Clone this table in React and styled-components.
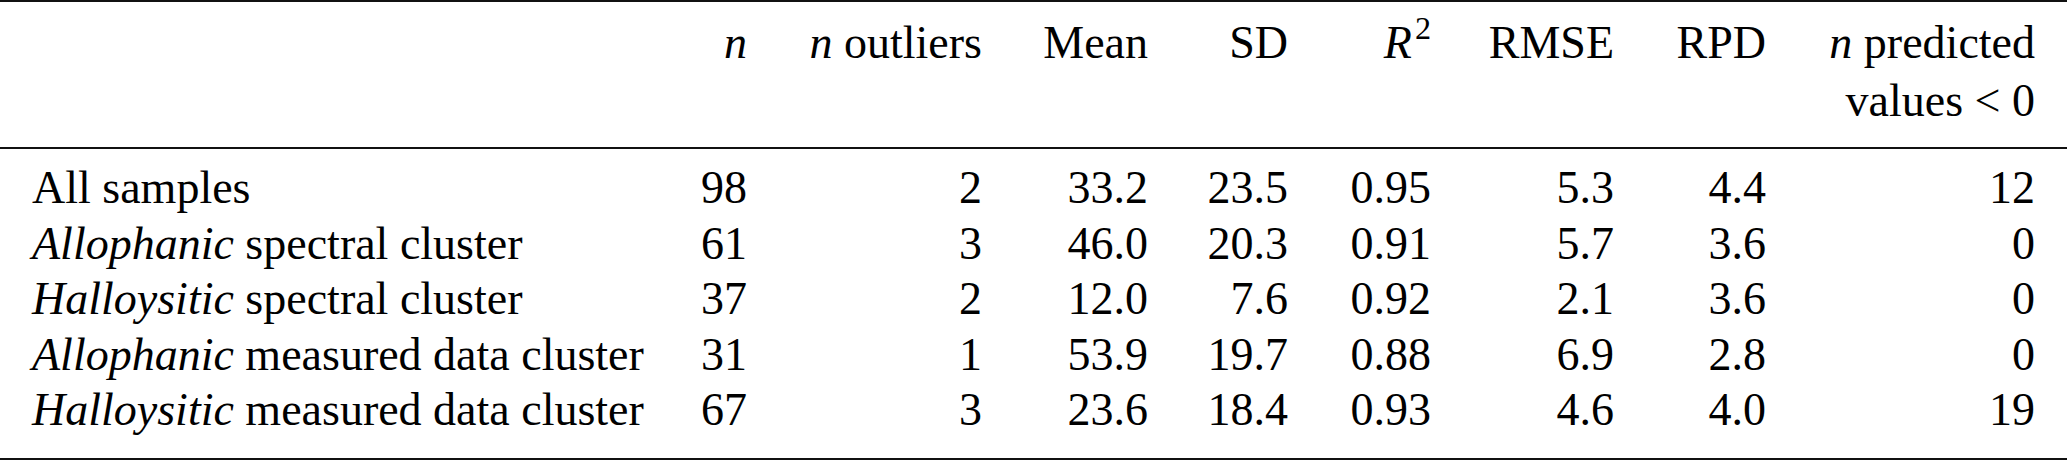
import React from 'react';
import styled, { createGlobalStyle } from 'styled-components';

const GlobalStyle = createGlobalStyle`
  html, body {
    margin: 0;
    padding: 0;
    background: #fff;
  }
`;

// label | n | n outliers | Mean | SD | R2 | RMSE | RPD | n predicted
const COLUMNS = '668px 47px 235px 166px 140px 143px 183px 152px 269px';

const Table = styled.div`
  width: 2067px;
  box-sizing: border-box;
  font-family: "Liberation Serif", "Times New Roman", serif;
  font-size: 46px;
  color: #000;
  border-top: 2px solid #111;
  border-bottom: 2px solid #111;
`;

const HeadRow = styled.div`
  display: grid;
  grid-template-columns: ${COLUMNS};
  padding: 12px 32px 17px;
  line-height: 58px;
  border-bottom: 2px solid #111;
`;

const Body = styled.div`
  padding: 11px 32px 20px;
`;

const Row = styled.div`
  display: grid;
  grid-template-columns: ${COLUMNS};
  line-height: 55.5px;
`;

const Cell = styled.div`
  text-align: ${(p) => (p.$left ? 'left' : 'right')};
  white-space: nowrap;
`;

const Var = styled.i`
  font-style: italic;
`;

const Sup = styled.sup`
  font-size: 0.7em;
  line-height: 0;
  vertical-align: 0.6em;
  margin-left: 3px;
`;

const rows = [
  { em: '', label: 'All samples', v: ['98', '2', '33.2', '23.5', '0.95', '5.3', '4.4', '12'] },
  { em: 'Allophanic', label: ' spectral cluster', v: ['61', '3', '46.0', '20.3', '0.91', '5.7', '3.6', '0'] },
  { em: 'Halloysitic', label: ' spectral cluster', v: ['37', '2', '12.0', '7.6', '0.92', '2.1', '3.6', '0'] },
  { em: 'Allophanic', label: ' measured data cluster', v: ['31', '1', '53.9', '19.7', '0.88', '6.9', '2.8', '0'] },
  { em: 'Halloysitic', label: ' measured data cluster', v: ['67', '3', '23.6', '18.4', '0.93', '4.6', '4.0', '19'] },
];

const App = () => (
  <>
    <GlobalStyle />
    <Table>
      <HeadRow>
        <Cell $left />
        <Cell><Var>n</Var></Cell>
        <Cell><Var>n</Var> outliers</Cell>
        <Cell>Mean</Cell>
        <Cell>SD</Cell>
        <Cell><Var>R</Var><Sup>2</Sup></Cell>
        <Cell>RMSE</Cell>
        <Cell>RPD</Cell>
        <Cell>
          <Var>n</Var> predicted
          <br />
          values &lt; 0
        </Cell>
      </HeadRow>
      <Body>
        {rows.map((r, i) => (
          <Row key={i}>
            <Cell $left>
              {r.em && <Var>{r.em}</Var>}
              {r.label}
            </Cell>
            {r.v.map((val, j) => (
              <Cell key={j}>{val}</Cell>
            ))}
          </Row>
        ))}
      </Body>
    </Table>
  </>
);

export default App;
